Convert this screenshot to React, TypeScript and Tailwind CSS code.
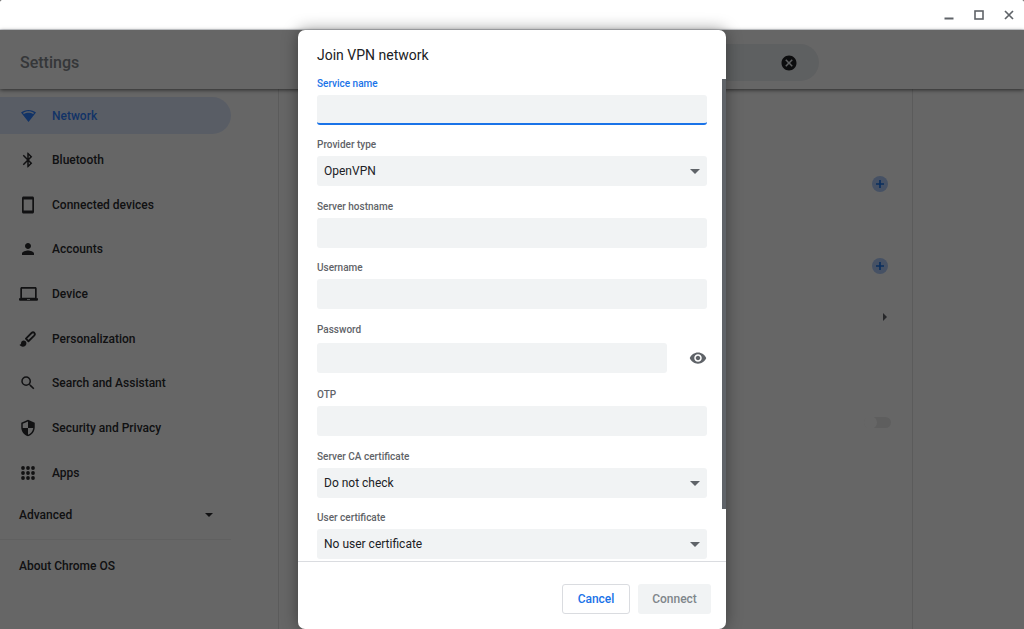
import React from "react";
import {
  MdBluetooth,
  MdPerson,
  MdSearch,
  MdCancel,
  MdVisibility,
} from "react-icons/md";

const WifiIcon = () => (
  <svg viewBox="0 0 24 24" className="size-[15px]" fill="currentColor" aria-hidden="true">
    <path
      fillRule="evenodd"
      d="M12 3C7.300 3 3.200 4.600 0 7.300L12 22.500 24 7.300C20.800 4.600 16.700 3 12 3zM12 5.300c3.300 0 6.300.9 8.800 2.500l-1.300 1.700C17.400 8.200 14.800 7.500 12 7.500s-5.400.7-7.500 2L3.200 7.800C5.700 6.200 8.700 5.300 12 5.300z"
    />
  </svg>
);

const PhoneIcon = () => (
  <svg viewBox="0 0 12 18" className="h-[18px] w-3" fill="currentColor" aria-hidden="true">
    <path
      fillRule="evenodd"
      d="M1.500.5h9C11.300.5 12 1.200 12 2v14c0 .8-.7 1.500-1.500 1.500h-9C.7 17.500 0 16.800 0 16V2C0 1.200.7.5 1.500.5zM1.700 3.500v11h8.600v-11z"
    />
  </svg>
);

const LaptopIcon = () => (
  <svg viewBox="0 0 19 14" className="h-[14px] w-[19px]" fill="currentColor" aria-hidden="true">
    <path
      fillRule="evenodd"
      d="M2.800 0h13.400c.9 0 1.500.7 1.500 1.500v9.700H19V12.500c0 .8-.6 1.300-1.300 1.300H1.300C.6 13.800 0 13.300 0 12.500v-1.300h1.300V1.500C1.300.7 1.900 0 2.800 0zM3 1.700v9h13v-9zM8 12v.8h3V12z"
    />
  </svg>
);

const BrushIcon = () => (
  <svg viewBox="0 0 24 24" className="size-[18px]" aria-hidden="true">
    <path
      d="M9.200 11.500 16.700 4c1.200-1.200 2.700-1.200 3.700-.3 1 1 .9 2.500-.2 3.700l-7.600 7.600z"
      fill="none"
      stroke="currentColor"
      strokeWidth="2.400"
      strokeLinejoin="round"
    />
    <path
      d="M6.300 14c-2 0-3.500 1.500-3.500 3.400 0 1.600-1.100 2.400-2.300 2.400 1 1.500 2.800 2.400 4.600 2.400 2.700 0 4.800-2 4.800-4.700C9.900 15.600 8.300 14 6.300 14z"
      fill="currentColor"
    />
  </svg>
);

const ShieldIcon = () => (
  <svg viewBox="0 0 24 24" className="size-[18px]" fill="currentColor" aria-hidden="true">
    <path
      fillRule="evenodd"
      d="M12 1 3 5v6c0 5.550 3.840 10.740 9 12 5.160-1.260 9-6.450 9-12V5l-9-4zm0 10.990h7c-.53 4.120-3.280 7.790-7 8.940V12H5V6.300l7-3.110v8.800z"
    />
  </svg>
);

const AppsIcon = () => (
  <svg viewBox="0 0 14 14" className="size-[14px]" fill="currentColor" aria-hidden="true">
    {[2, 7, 12].map((y) => [2, 7, 12].map((x) => <circle key={`${x}-${y}`} cx={x} cy={y} r="1.900" />))}
  </svg>
);

const icon = "size-[18px]";

const navItems = [
  { label: "Network", icon: <WifiIcon />, active: true },
  { label: "Bluetooth", icon: <MdBluetooth className={icon} /> },
  { label: "Connected devices", icon: <PhoneIcon /> },
  { label: "Accounts", icon: <MdPerson className={icon} /> },
  { label: "Device", icon: <LaptopIcon /> },
  { label: "Personalization", icon: <BrushIcon /> },
  { label: "Search and Assistant", icon: <MdSearch className={icon} /> },
  { label: "Security and Privacy", icon: <ShieldIcon /> },
  { label: "Apps", icon: <AppsIcon /> },
];

function TitleBar() {
  const button = "flex size-[30px] items-center justify-center";
  return (
    <div className="flex h-[30px] shrink-0 items-center justify-end border-b border-[#dadce0] bg-white text-[#5f6368]">
      <button type="button" aria-label="Minimize" className={button}>
        <svg viewBox="0 0 10 10" className="size-[10px]" aria-hidden="true">
          <path d="M.5 8.500h9" stroke="currentColor" strokeWidth="2" />
        </svg>
      </button>
      <button type="button" aria-label="Maximize" className={button}>
        <svg viewBox="0 0 10 10" className="size-[10px]" aria-hidden="true">
          <rect x="1" y="1" width="8" height="8" fill="none" stroke="currentColor" strokeWidth="1.600" />
        </svg>
      </button>
      <button type="button" aria-label="Close" className={button}>
        <svg viewBox="0 0 10 10" className="size-[10px]" aria-hidden="true">
          <path d="M1 1l8 8M9 1l-8 8" stroke="currentColor" strokeWidth="1.700" />
        </svg>
      </button>
    </div>
  );
}

function Sidebar() {
  return (
    <nav className="w-[279px] shrink-0 border-r border-[#e4e4e4] pt-2 text-xs font-medium">
      <ul className="flex h-[394px] flex-col justify-between">
        {navItems.map((item) => (
          <li key={item.label}>
            <a
              href="#"
              className={
                "flex h-[37px] w-[231px] items-center gap-[15px] rounded-r-full pl-[19px] " +
                (item.active ? "bg-[#dfe9fd] text-[#2f80ff]" : "")
              }
            >
              <span className="flex w-[18px] justify-center *:shrink-0">{item.icon}</span>
              {item.label}
            </a>
          </li>
        ))}
      </ul>
      <div className="w-[231px] border-b border-[#f0f0f0]">
        <button type="button" className="flex h-12 w-full items-center justify-between pr-[18px] pl-[19px]">
          Advanced
          <svg viewBox="0 0 8 4" className="h-1 w-2" fill="currentColor" aria-hidden="true">
            <path d="M0 0h8L4 4z" />
          </svg>
        </button>
      </div>
      <a href="#" className="flex h-[52px] items-center pl-[19px]">
        About Chrome OS
      </a>
    </nav>
  );
}

function AddButton({ label }: { label: string }) {
  return (
    <button type="button" aria-label={label} className="flex size-4 items-center justify-center rounded-full bg-[#aecbfa] text-[#1a73e8]">
      <svg viewBox="0 0 10 10" className="size-[10px]" aria-hidden="true">
        <path d="M5 1v8M1 5h8" stroke="currentColor" strokeWidth="1.700" />
      </svg>
    </button>
  );
}

function SettingsPage() {
  return (
    <div className="flex flex-1 flex-col bg-white text-[#2b2c2f]">
      <header className="z-10 flex items-center bg-white pt-[14px] pr-[205px] pb-2 pl-5 shadow-[0_1px_4px_rgba(0,0,0,0.6)]">
        <h1 className="flex-1 text-base font-medium text-[#85898e]">Settings</h1>
        <div className="flex h-[37px] w-[500px] items-center justify-end rounded-full bg-[#eceff2] pr-[21px]">
          <button type="button" aria-label="Clear search" className="text-[#202124]">
            <MdCancel className="size-[18px]" />
          </button>
        </div>
      </header>
      <div className="flex flex-1">
        <Sidebar />
        <main className="flex flex-1 flex-col items-end border-r border-[#e4e4e4] pt-[87px] pr-[21px]">
          <div className="flex flex-col items-end pr-[3px]">
            <AddButton label="Add Google account network" />
            <div className="pt-[66px]">
              <AddButton label="Add connection" />
            </div>
            <button type="button" aria-label="VPN" className="mt-[39px] pr-px">
              <svg viewBox="0 0 4 8" className="h-2 w-1" fill="#5f6368" aria-hidden="true">
                <path d="M0 0v8l4-4z" />
              </svg>
            </button>
          </div>
          <button
            type="button"
            role="switch"
            aria-checked="false"
            aria-label="Always-on"
            className="mt-24 flex h-[11px] w-[27px] items-center rounded-full bg-[#ebebeb]"
          >
            <span className="size-[13px] rounded-full bg-white" />
          </button>
        </main>
        <div className="w-[111px] shrink-0" />
      </div>
    </div>
  );
}

const fieldClass = "h-[30px] w-full appearance-none rounded-[3px] bg-[#f1f3f4] px-[7px] text-xs text-[#202124] outline-none";

function Label({ id, text, active }: { id: string; text: string; active?: boolean }) {
  return (
    <label htmlFor={id} className={"mb-[5px] block text-[10px] leading-3 font-medium " + (active ? "text-[#1a73e8]" : "text-[#5f6368]")}>
      {text}
    </label>
  );
}

function TextField({ id, label, active }: { id: string; label: string; active?: boolean }) {
  return (
    <div>
      <Label id={id} text={label} active={active} />
      <input id={id} type="text" className={fieldClass + " block" + (active ? " border-b-2 border-[#1a73e8]" : "")} />
    </div>
  );
}

function SelectField({ id, label, value }: { id: string; label: string; value: string }) {
  return (
    <div>
      <Label id={id} text={label} />
      <div className="relative">
        <select id={id} className={fieldClass + " block"}>
          <option>{value}</option>
        </select>
        <svg viewBox="0 0 10 5" className="pointer-events-none absolute top-[13px] right-[7px] h-[5px] w-[10px]" fill="#5f6368" aria-hidden="true">
          <path d="M0 0h10L5 5z" />
        </svg>
      </div>
    </div>
  );
}

function VpnDialog() {
  return (
    <form
      role="dialog"
      aria-labelledby="dialog-title"
      className="relative flex w-[428px] flex-col overflow-hidden rounded-[7px] bg-white shadow-[0_0_16px_rgba(0,0,0,0.4)]"
    >
      <h2 id="dialog-title" className="px-[19px] pt-[15px] pb-[13px] text-sm leading-5 text-[#202124]">
        Join VPN network
      </h2>
      <div className="flex flex-1 flex-col justify-between px-[19px] pb-0.5">
        <TextField id="service" label="Service name" active />
        <SelectField id="provider" label="Provider type" value="OpenVPN" />
        <TextField id="hostname" label="Server hostname" />
        <TextField id="username" label="Username" />
        <div>
          <Label id="password" text="Password" />
          <div className="flex items-center gap-[22px]">
            <input id="password" type="password" className={fieldClass + " min-w-0 flex-1"} />
            <button type="button" aria-label="Show password" className="flex h-[34px] items-center text-[#5f6368]">
              <MdVisibility className="size-[18px]" />
            </button>
          </div>
        </div>
        <TextField id="otp" label="OTP" />
        <SelectField id="server-ca" label="Server CA certificate" value="Do not check" />
        <SelectField id="user-cert" label="User certificate" value="No user certificate" />
      </div>
      <div className="absolute top-[49px] right-0 h-[430px] w-1 bg-[#5f6368]" />
      <div className="flex justify-end gap-2 border-t border-[#dadce0] px-[15px] pt-[22px] pb-[15px] text-xs font-medium">
        <button type="button" className="h-[30px] w-[68px] rounded-[3px] border border-[#dadce0] text-[#1a73e8]">
          Cancel
        </button>
        <button type="submit" disabled className="h-[30px] w-[73px] rounded-[3px] bg-[#f1f3f4] text-[#80868b]">
          Connect
        </button>
      </div>
    </form>
  );
}

export default function App() {
  return (
    <div className="bg-[#444]">
      <div className="flex min-h-screen flex-col overflow-hidden rounded-t-[2px] font-['Roboto',sans-serif]">
        <TitleBar />
        <div className="relative flex flex-1 flex-col">
          <SettingsPage />
          <div className="absolute inset-0 z-20 flex justify-center bg-black/60">
            <VpnDialog />
          </div>
        </div>
      </div>
    </div>
  );
}
